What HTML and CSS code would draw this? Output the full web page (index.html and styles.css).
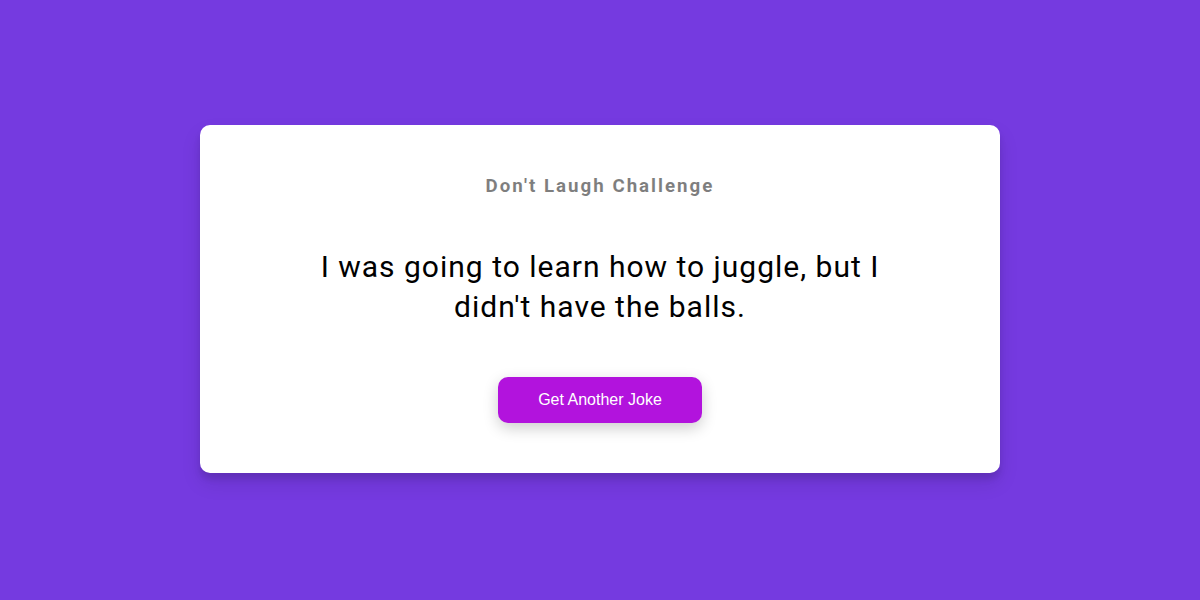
FILE: index.html
```html
<!DOCTYPE html>
<html lang="en">
<head>
<meta charset="UTF-8">
<title>Don't Laugh Challenge</title>
<link rel="stylesheet" href="styles.css">
</head>
<body>
  <div class="container">
    <h3 class="title">Don't Laugh Challenge</h3>
    <div class="joke">I was going to learn how to juggle, but I didn't have the balls.</div>
    <button class="btn">Get Another Joke</button>
  </div>
</body>
</html>
```
FILE: styles.css
```css
* { box-sizing: border-box; }

body {
  margin: 0;
  height: 100vh;
  padding-bottom: 2px;
  background: #753ae0;
  font-family: Roboto, "Liberation Sans", sans-serif;
  display: flex;
  flex-direction: column;
  align-items: center;
  justify-content: center;
  overflow: hidden;
}

.container {
  background: #ffffff;
  border-radius: 10px;
  box-shadow: 0 10px 20px rgba(0, 0, 0, 0.1), 0 6px 6px rgba(0, 0, 0, 0.1);
  padding: 50px 20px;
  text-align: center;
  width: 800px;
  max-width: 100%;
}

.title {
  margin: 0;
  font-size: 18.72px;
  opacity: 0.5;
  letter-spacing: 2px;
}

.joke {
  font-size: 30px;
  letter-spacing: 1px;
  line-height: 40px;
  margin: 50px auto;
  max-width: 600px;
  color: #000;
}

.btn {
  background: #b213dd;
  color: #fff;
  border: 0;
  border-radius: 10px;
  box-shadow: 0 5px 15px rgba(0, 0, 0, 0.2);
  padding: 14px 40px;
  font-family: "Liberation Sans", Arial, sans-serif;
  font-size: 16px;
  cursor: pointer;
}
```
